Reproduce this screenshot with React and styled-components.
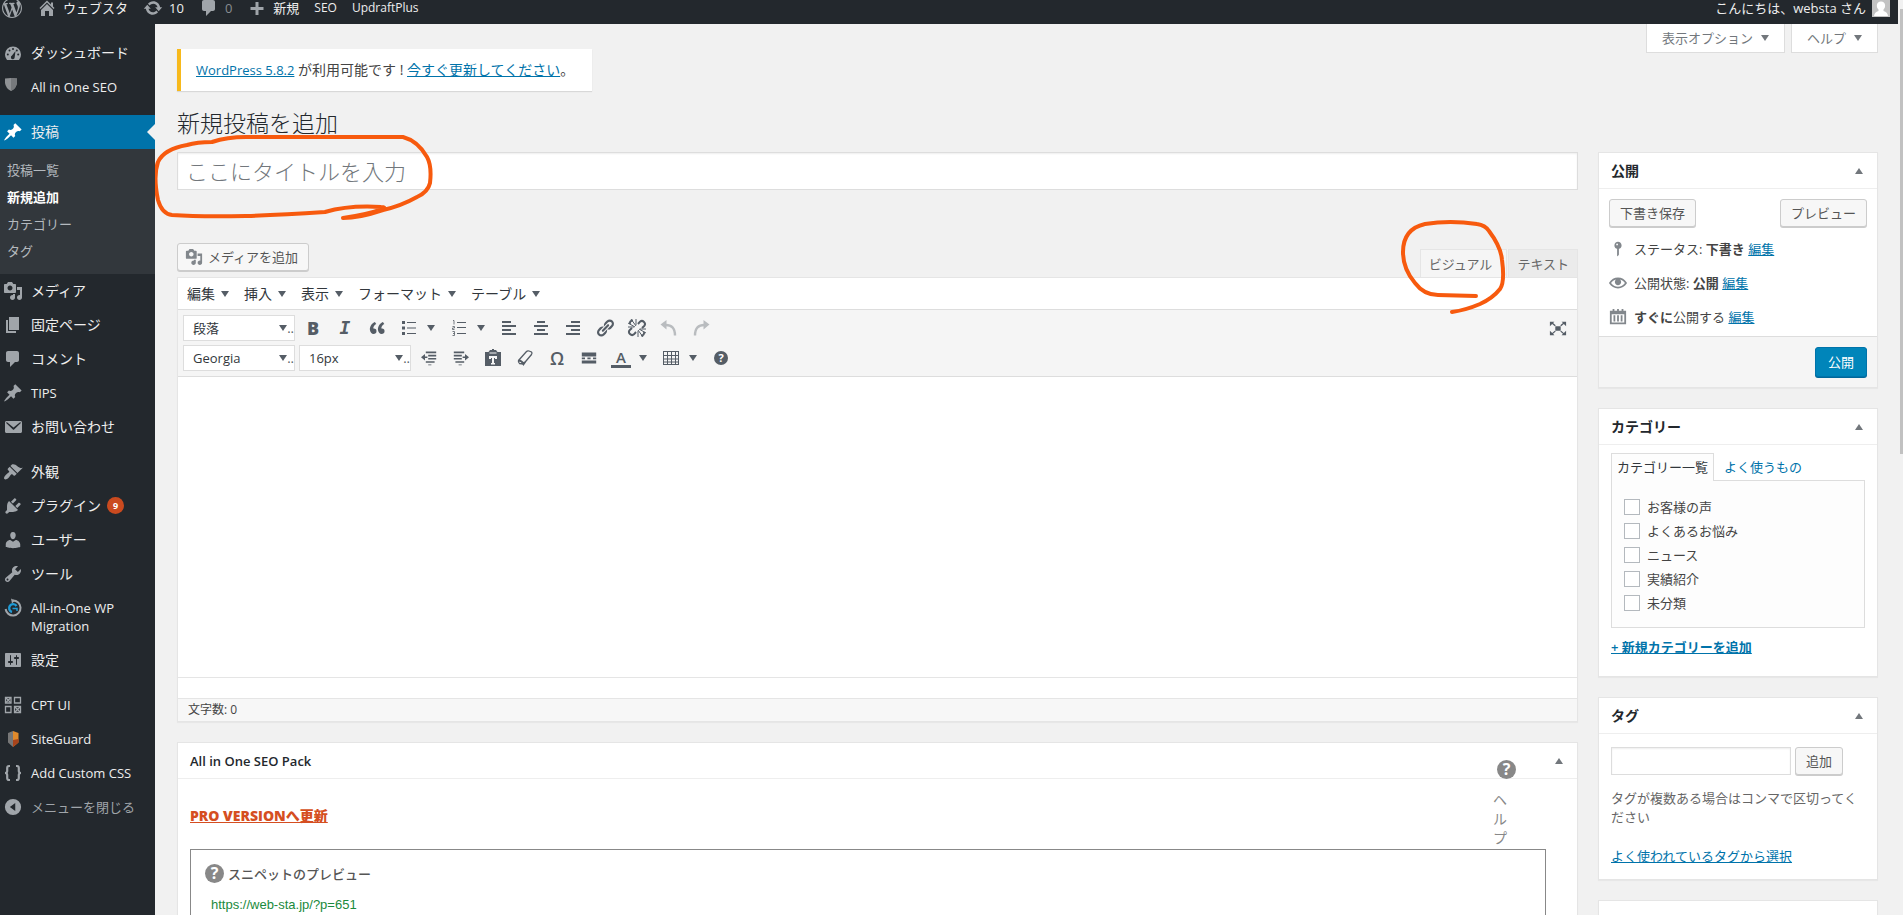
import styled, { createGlobalStyle } from "styled-components";

const GlobalStyle = createGlobalStyle`
  * {
    box-sizing: border-box;
  }

  body {
    margin: 0;
    background: #f1f1f1;
    color: #444;
    font-family: "Open Sans", "Noto Sans CJK JP", sans-serif;
    font-size: 13px;
    line-height: 18px;
  }

  button, input, select {
    margin: 0;
    font: inherit;
    color: inherit;
  }

  a {
    color: #0073aa;
  }
`;

/* ---------- icons ---------- */

const ICONS = {
  wordpress:
    "M20 10c0-5.51-4.49-10-10-10C4.48 0 0 4.49 0 10c0 5.52 4.48 10 10 10 5.51 0 10-4.48 10-10zM7.78 15.37L4.37 6.22c.55-.02 1.17-.08 1.17-.08.5-.06.44-1.13-.06-1.11 0 0-1.45.11-2.37.11-.18 0-.37 0-.58-.01C4.12 2.69 6.87 1.11 10 1.11c2.33 0 4.45.87 6.05 2.34-.68-.11-1.65.39-1.65 1.58 0 .74.45 1.36.9 2.1.35.61.55 1.36.55 2.46 0 1.49-1.4 5-1.4 5l-3.03-8.37c.54-.02.82-.17.82-.17.5-.05.44-1.25-.06-1.22 0 0-1.44.12-2.38.12-.87 0-2.33-.12-2.33-.12-.5-.03-.56 1.2-.06 1.22l.92.08 1.26 3.41zM17.41 10c.24-.64.74-1.87.43-4.25.7 1.29 1.05 2.71 1.05 4.25 0 3.29-1.73 6.24-4.4 7.78.97-2.59 1.94-5.2 2.92-7.78zM6.1 18.09C3.12 16.65 1.11 13.53 1.11 10c0-1.3.23-2.48.72-3.59C3.25 10.3 4.67 14.2 6.1 18.09zm4.03-6.63l2.58 6.98c-.86.29-1.76.45-2.71.45-.79 0-1.57-.11-2.29-.33.81-2.38 1.62-4.74 2.42-7.1z",
  home: "M16 8.5l1.53 1.53-1.06 1.06L10 4.6l-6.47 6.49-1.06-1.06L10 2.5l4 4v-2h2v4zm-6-2.46l6 5.99V18h-4v-5H8v5H4v-5.97z",
  update:
    "M10.2 3.28c3.53 0 6.43 2.61 6.92 6h2.08l-3.5 4-3.5-4h2.32c-.45-1.97-2.21-3.45-4.32-3.45-1.45 0-2.73.71-3.54 1.78L4.95 5.66C6.23 4.2 8.11 3.28 10.2 3.28zm-.4 13.44c-3.52 0-6.43-2.61-6.92-6H.8l3.5-4 3.5 4H5.48c.45 1.97 2.21 3.45 4.32 3.45 1.45 0 2.73-.71 3.54-1.78l1.71 1.95c-1.28 1.46-3.15 2.38-5.25 2.38z",
  comment:
    "M5 2h9c1.1 0 2 .9 2 2v7c0 1.1-.9 2-2 2h-2l-5 5v-5H5c-1.1 0-2-.9-2-2V4c0-1.1.9-2 2-2z",
  plus: "M16.5 9v3h-5v5h-3v-5h-5V9h5V4h3v5z",
  pin: "M10.44 3.02l1.82-1.82 6.36 6.35-1.83 1.82c-1.05-.68-2.48-.57-3.41.36l-.75.75c-.92.93-1.04 2.35-.35 3.41l-1.83 1.82-2.41-2.41-2.8 2.79c-.42.42-3.38 2.71-3.8 2.29s1.86-3.39 2.28-3.81l2.79-2.79L4.1 9.36l1.83-1.82c1.05.69 2.48.57 3.4-.36l.75-.75c.93-.92 1.05-2.35.36-3.41z",
  media:
    "M13 11V4c0-.55-.45-1-1-1h-1.67L9 1H5L3.67 3H2c-.55 0-1 .45-1 1v7c0 .55.45 1 1 1h10c.55 0 1-.45 1-1zM7 4.5c1.38 0 2.5 1.12 2.5 2.5S8.38 9.5 7 9.5 4.5 8.38 4.5 7 5.62 4.5 7 4.5zM14 6h5v10.5c0 1.38-1.12 2.5-2.5 2.5S14 17.88 14 16.5s1.12-2.5 2.5-2.5c.17 0 .34.02.5.05V9h-3V6zm-4 8.05V13h2v3.5c0 1.38-1.12 2.5-2.5 2.5S7 17.88 7 16.5 8.12 14 9.5 14c.17 0 .34.02.5.05z",
  page: "M6 15V2h10v13H6zm-1 1h8v2H3V5h2v11z",
  email:
    "M19 14.5v-9c0-.83-.67-1.5-1.5-1.5H3.49c-.83 0-1.5.67-1.5 1.5v9c0 .83.67 1.5 1.5 1.5H17.5c.83 0 1.5-.67 1.5-1.5zM17.7 5.4c.3.3.1.6-.1.8l-6.5 6.2c-.4.3-.8.3-1.2 0L3.4 6.2c-.2-.2-.4-.5-.1-.8s.7-.2 1 .1l6.2 5 6.2-5c.3-.3.7-.4 1-.1z",
  appearance:
    "M14.48 11.06L7.41 3.99l1.5-1.5c.5-.56 2.3-.47 3.51.32 1.21.8 1.43 1.28 2.91 2.1 1.18.64 2.45 1.26 4.45.85zm-.71.71L6.7 4.7 4.93 6.47c-.39.39-.39 1.02 0 1.41l1.06 1.06c.39.39.39 1.03 0 1.42-.6.6-1.43 1.11-2.21 1.69-.35.26-.7.53-1.01.84C1.43 14.23.4 16.08 1.4 17.07c.99 1 2.84-.03 4.18-1.36.31-.31.58-.66.85-1.02.57-.78 1.08-1.61 1.69-2.21.39-.39 1.02-.39 1.41 0l1.06 1.06c.39.39 1.02.39 1.41 0z",
  plugins:
    "M13.11 4.36L9.87 7.6 8 5.73l3.24-3.24c.35-.34 1.05-.2 1.56.32.52.51.66 1.21.31 1.55zm-8 1.77l.91-1.12 9.01 9.01-1.19.84c-.71.71-2.63 1.16-3.82 1.16H6.14L4.9 17.26c-.59.59-1.54.59-2.12 0-.59-.58-.59-1.53 0-2.12l1.24-1.24v-3.88c0-1.13.4-3.19 1.09-3.89zm7.26 3.97l3.24-3.24c.34-.35 1.04-.21 1.55.31.52.51.66 1.21.31 1.55l-3.24 3.25z",
  users:
    "M10 9.25c-2.27 0-2.73-3.44-2.73-3.44C7 4.02 7.82 2 9.97 2c2.16 0 2.98 2.02 2.71 3.81 0 0-.41 3.44-2.68 3.44zm0 2.57L12.72 10c2.39 0 4.52 2.33 4.52 4.53v2.49s-3.65 1.13-7.24 1.13c-3.65 0-7.24-1.13-7.24-1.13v-2.49c0-2.25 1.94-4.48 4.47-4.48z",
  tools:
    "M16.68 9.77c-1.34 1.34-3.3 1.67-4.95.99l-5.41 6.52c-.99.99-2.59.99-3.58 0s-.99-2.59 0-3.57l6.52-5.42c-.68-1.65-.35-3.61.99-4.95 1.28-1.28 3.12-1.62 4.72-1.06l-2.89 2.89 2.82 2.82 2.86-2.87c.53 1.58.18 3.39-1.08 4.65zM3.81 16.21c.4.39 1.04.39 1.43 0 .4-.4.4-1.04 0-1.43-.39-.4-1.03-.4-1.43 0-.39.39-.39 1.03 0 1.43z",
  settings:
    "M18 16V4c0-.55-.45-1-1-1H3c-.55 0-1 .45-1 1v12c0 .55.45 1 1 1h14c.55 0 1-.45 1-1zM8 11h1c.55 0 1 .45 1 1s-.45 1-1 1H8v1.5c0 .28-.22.5-.5.5s-.5-.22-.5-.5V13H6c-.55 0-1-.45-1-1s.45-1 1-1h1V5.5c0-.28.22-.5.5-.5s.5.22.5.5V11zm5-2h-1c-.55 0-1-.45-1-1s.45-1 1-1h1V5.5c0-.28.22-.5.5-.5s.5.22.5.5V7h1c.55 0 1 .45 1 1s-.45 1-1 1h-1v5.5c0 .28-.22.5-.5.5s-.5-.22-.5-.5V9z",
  collapse: "M10 1a9 9 0 1 0 0 18 9 9 0 0 0 0-18zM12.5 5.5v9L6.5 10z",
  visibility:
    "M19.7 9.4C17.7 6 14 3.9 10 3.9S2.3 6 .3 9.4L0 10l.3.6c2 3.4 5.7 5.5 9.7 5.5s7.7-2.1 9.7-5.5l.3-.6-.3-.6zM10 14.1c-3.1 0-6-1.6-7.7-4.1C3.6 8 5.7 6.6 8 6.1c-.9.6-1.5 1.7-1.5 2.9 0 1.9 1.6 3.5 3.5 3.5s3.5-1.6 3.5-3.5c0-1.2-.6-2.3-1.5-2.9 2.3.5 4.4 1.9 5.7 3.9-1.7 2.5-4.6 4.1-7.7 4.1z",
  status:
    "M14 6c0 1.86-1.28 3.41-3 3.86V16c0 1-2 2-2 2V9.86C7.28 9.41 6 7.86 6 6c0-2.21 1.79-4 4-4s4 1.79 4 4zM8 5c0 .55.45 1 1 1s1-.45 1-1-.45-1-1-1-1 .45-1 1z",
  calendar:
    "M1 3h3V1h2v2h3V1h2v2h3V1h2v2h3v15H1zM3 7v9h14V7zM5 8h2v7H5zM9 8h2v7H9zM13 8h2v7h-2z",
  quote:
    "M9.49 13.22c0-.74-.2-1.38-.61-1.9-.62-.78-1.83-.88-2.53-.72-.29-1.65 1.11-3.75 2.92-4.65L7.88 4c-2.73 1.3-5.42 4.28-4.96 8.05C3.21 14.43 4.59 16 6.54 16c.85 0 1.56-.25 2.12-.75s.83-1.18.83-2.03zm8.05 0c0-.74-.2-1.38-.61-1.9-.63-.78-1.83-.88-2.53-.72-.29-1.65 1.11-3.75 2.92-4.65L15.93 4c-2.73 1.3-5.41 4.28-4.95 8.05.29 2.38 1.66 3.95 3.61 3.95.85 0 1.56-.25 2.12-.75s.83-1.18.83-2.03z",
  alignLeft: "M12 5V3H3v2h9zm5 4V7H3v2h14zm-5 4v-2H3v2h9zm5 4v-2H3v2h14z",
  alignCenter: "M14 5V3H6v2h8zm3 4V7H3v2h14zm-3 4v-2H6v2h8zm3 4v-2H3v2h14z",
  alignRight: "M17 5V3H8v2h9zm0 4V7H3v2h14zm0 4v-2H8v2h9zm0 4v-2H3v2h14z",
  bullets:
    "M3 3h3v3H3zM3 8.500h3v3H3zM3 14h3v3H3zM8 4h9v1H8zM8 9.500h9v1H8zM8 15h9v1H8z",
  link: "M17.74 2.76c1.68 1.69 1.68 4.41 0 6.1l-1.53 1.52c-1.12 1.12-2.7 1.47-4.14 1.09l2.62-2.61.76-.77.76-.76c.84-.84.84-2.2 0-3.04-.84-.85-2.2-.85-3.04 0l-.77.76-3.38 3.38c-.37-1.44-.02-3.02 1.1-4.14l1.52-1.53c1.69-1.68 4.42-1.68 6.1 0zM8.59 13.43l5.34-5.34c.42-.42.42-1.1 0-1.52-.44-.43-1.13-.39-1.53 0l-5.33 5.34c-.42.42-.42 1.1 0 1.52.44.43 1.13.39 1.52 0zm-.76 2.29l4.14-4.15c.38 1.44.03 3.02-1.09 4.14l-1.52 1.53c-1.69 1.68-4.41 1.68-6.1 0-1.68-1.68-1.68-4.42 0-6.1l1.53-1.52c1.12-1.12 2.7-1.47 4.14-1.1l-4.14 4.15c-.85.84-.85 2.2 0 3.05.84.84 2.2.84 3.04 0z",
  outdent:
    "M6 2h13v2H6zM9 6h10v2H9zM9 10h10v2H9zM6 14h11v2H6zM9 18h4v1H9zM0 9l5-4v3h3v2H5v3z",
  indent:
    "M1 2h13v2H1zM1 6h10v2H1zM1 10h10v2H1zM3 14h11v2H3zM7 18h4v1H7zM20 9l-5-4v3h-3v2h3v3z",
  paste:
    "M2 4h3.5L7 2h2V1h2v1h2l1.500 2H18v14H2zM6.500 5.500h7v-1h-7zM6 8v3h2v-1h1v5H8v1.500h4V15h-1v-5h1v1h2V8z",
  more: "M1 3h18v5H1zM1 9.500h4v2H1zM8 9.500h4v2H8zM15 9.500h4v2h-4zM1 13h18v4H1z",
  table:
    "M2 3h16v14H2zM3 4v3h3V4zM7 4v3h3V4zM11 4v3h3V4zM15 4v3h2V4zM3 8v2.500h3V8zM7 8v2.500h3V8zM11 8v2.500h3V8zM15 8v2.500h2V8zM3 11.500V13.500h3v-2zM7 11.500V13.500h3v-2zM11 11.500V13.500h3v-2zM15 11.500V13.500h2v-2zM3 14.500V16h3v-1.500zM7 14.500V16h3v-1.500zM11 14.500V16h3v-1.500zM15 14.500V16h2v-1.500z",
  fullscreen:
    "M7 8h6v5H7zM1 3h5L4.500 4.500 7.500 7 6.500 8 3.500 5.500 1 8zM19 3h-5l1.500 1.500L12.500 7l1 1 3-2.500L19 8zM1 18h5l-1.500-1.500L7.500 14l-1-1-3 2.500L1 13zM19 18h-5l1.500-1.500L12.500 14l1-1 3 2.500L19 13z",
};

function Icon({ name, size = 20 }) {
  return (
    <svg width={size} height={size} viewBox="0 0 20 20" fill="currentColor" fillRule="evenodd" aria-hidden="true">
      <path d={ICONS[name]} />
    </svg>
  );
}

function DashboardIcon() {
  return (
    <svg width="20" height="20" viewBox="0 0 20 20" aria-hidden="true">
      <path d="M4 17h12a8 8 0 0 0 2-5.500 8 8 0 0 0-16 0A8 8 0 0 0 4 17z" fill="currentColor" />
      <g fill="#23282d">
        <circle cx="10" cy="6" r="1" />
        <circle cx="6.500" cy="7.500" r="1" />
        <circle cx="13.800" cy="7.500" r="1" />
        <circle cx="4.800" cy="11.500" r="1" />
        <circle cx="15.200" cy="11.500" r="1" />
        <path d="M12.500 8l-.8 6.200a1.900 1.900 0 1 1-2.700-1.600z" />
      </g>
    </svg>
  );
}

function ShieldIcon() {
  return (
    <svg width="20" height="20" viewBox="0 0 20 20" aria-hidden="true">
      <path d="M2 1.500Q8 .5 14 1.500v4.500q-.5 5-6 8-5.500-3-6-8z" fill="#8f9295" />
      <path d="M8 1q3 0 6 .5v4.500q-.5 5-6 8z" fill="#777a7d" />
    </svg>
  );
}

function MigrationIcon() {
  return (
    <svg width="20" height="20" viewBox="0 0 20 20" fill="none" aria-hidden="true">
      <path d="M10 2.500a7.500 7.500 0 1 1-7.400 8.500" stroke="#a0a5aa" strokeWidth="2" />
      <path d="M8 .5l4 2-3 3z" fill="#a0a5aa" />
      <path d="M13.500 8A4 4 0 1 0 9 14" stroke="#1f9bd6" strokeWidth="2.400" />
      <path d="M9.500 10.500h4.500v2.500" stroke="#1f9bd6" strokeWidth="1.500" />
    </svg>
  );
}

function CptIcon() {
  return (
    <svg width="20" height="20" viewBox="0 0 20 20" fill="none" stroke="#a0a5aa" strokeWidth="1.300" aria-hidden="true">
      <path d="M2.500 2.500h5.500v5.500H2.500zM11.500 2.500h6v5.500h-6zM2.500 11.500h5.500v6H2.500zM11.500 11.500h6v6h-6z" />
      <path d="M3 3l4.500 4.500M7.500 3L3 7.500M12 12l5 5M17 12l-5 5" />
    </svg>
  );
}

function GuardIcon() {
  return (
    <svg width="20" height="20" viewBox="0 0 20 20" aria-hidden="true">
      <path d="M10 2L5 4v9.500L10 18z" fill="#777" />
      <path d="M10 2l5.500 2v9.500L10 18z" fill="#e08a2b" />
      <path d="M10 11l5.500-1v3.500L10 18z" fill="#a8441c" />
    </svg>
  );
}

function BracesIcon() {
  return (
    <svg width="20" height="20" viewBox="0 0 20 20" fill="none" stroke="currentColor" strokeWidth="2.200" aria-hidden="true">
      <path d="M7 3H6Q4.200 3 4.200 5v3Q4.200 10 2 10q2.200 0 2.200 2v3q0 2 1.800 2h1" />
      <path d="M13 3h1q1.800 0 1.800 2v3q0 2 2.200 2-2.200 0-2.200 2v3q0 2-1.800 2h-1" />
    </svg>
  );
}

function NumbersIcon() {
  return (
    <svg width="20" height="20" viewBox="0 0 20 20" fill="none" stroke="currentColor" aria-hidden="true">
      <path d="M8 4.500h9M8 9.500h9M8 15.500h9" />
      <path d="M4 2.500h1v4M3.500 8.500h2v1.500h-2v1.500h2M3.500 13.500h2v4h-2M4 15.500h1.500" strokeWidth=".8" />
    </svg>
  );
}

function UnlinkIcon() {
  return (
    <svg width="20" height="20" viewBox="0 0 20 20" fill="none" stroke="currentColor" strokeWidth="2" aria-hidden="true">
      <path d="M11 6l2-2.300q2-1.700 4 .3t.2 4L15 10M9 14l-2 2.300q-2 1.700-4-.3t-.2-4L5 10M3 6q-.5-3.500 3-3.500M17 14q.5 3.500-3 3.500" />
      <path d="M1 5l7 4M4 1l5 7M1 9h6M9 1v6M19 15l-7-4M16 19l-5-7M19 11h-6M11 19v-6" strokeWidth="1" />
    </svg>
  );
}

function ArrowIcon({ redo }) {
  return (
    <svg width="20" height="20" viewBox="0 0 20 20" aria-hidden="true">
      <g transform={redo ? "translate(20 0) scale(-1 1)" : undefined}>
        <path d="M6 7q10-.5 10 10.500" fill="none" stroke="currentColor" strokeWidth="2.400" />
        <path d="M1.500 6.500L7.500 2v9.500z" fill="currentColor" />
      </g>
    </svg>
  );
}

function EraserIcon() {
  return (
    <svg width="20" height="20" viewBox="0 0 20 20" fill="none" stroke="currentColor" strokeWidth="1.300" aria-hidden="true">
      <path d="M3.500 12.500l8-9q1-1 2.500-.5l2.500 1q1 1 0 2.500l-8 9.500-4-.5q-1.500-1-1-3z" />
      <path d="M3.800 12.500q3 .2 4.700 3.500l1.500-2" strokeWidth="2" />
    </svg>
  );
}

function Caret({ up }) {
  return (
    <svg width="8" height="8" viewBox="0 0 8 8" fill="currentColor" aria-hidden="true">
      <path d={up ? "M0 7h8L4 1z" : "M0 1h8L4 7z"} />
    </svg>
  );
}

/* ---------- data ---------- */

const SUBMENU = ["投稿一覧", "新規追加", "カテゴリー", "タグ"];

const MENU = [
  [
    { label: "ダッシュボード", icon: <DashboardIcon /> },
    { label: "All in One SEO", icon: <ShieldIcon />, small: true },
  ],
  [
    { label: "投稿", icon: <Icon name="pin" />, active: true },
    { label: "メディア", icon: <Icon name="media" /> },
    { label: "固定ページ", icon: <Icon name="page" /> },
    { label: "コメント", icon: <Icon name="comment" /> },
    { label: "TIPS", icon: <Icon name="pin" />, small: true },
    { label: "お問い合わせ", icon: <Icon name="email" /> },
  ],
  [
    { label: "外観", icon: <Icon name="appearance" /> },
    { label: "プラグイン", icon: <Icon name="plugins" />, count: 9 },
    { label: "ユーザー", icon: <Icon name="users" /> },
    { label: "ツール", icon: <Icon name="tools" /> },
    { label: "All-in-One WP Migration", icon: <MigrationIcon />, small: true },
    { label: "設定", icon: <Icon name="settings" /> },
  ],
  [
    { label: "CPT UI", icon: <CptIcon />, small: true },
    { label: "SiteGuard", icon: <GuardIcon />, small: true },
    { label: "Add Custom CSS", icon: <BracesIcon />, small: true },
    { label: "メニューを閉じる", icon: <Icon name="collapse" size={18} />, muted: true, small: true },
  ],
];

const EDITOR_MENUS = ["編集", "挿入", "表示", "フォーマット", "テーブル"];
const CATEGORIES = ["お客様の声", "よくあるお悩み", "ニュース", "実績紹介", "未分類"];

/* ---------- parts ---------- */

function ListBox({ label, value }) {
  return (
    <ListBoxWrap>
      <ListSelect aria-label={label} defaultValue={value}>
        <option>{value}</option>
      </ListSelect>
      <ListMark>
        <Caret />
        ..
      </ListMark>
    </ListBoxWrap>
  );
}

function Tool({ label, children, menu, faded }) {
  return (
    <>
      <ToolButton aria-label={label} $faded={faded}>
        {children}
      </ToolButton>
      {menu && (
        <ToolCaret aria-label={`${label} メニュー`}>
          <Caret />
        </ToolCaret>
      )}
    </>
  );
}

function PostBox({ title, small, children }) {
  return (
    <Box>
      <BoxHeader>
        <BoxTitle $small={small}>{title}</BoxTitle>
        <Toggle aria-label={`${title} パネルを切り替え`}>
          <Caret up />
        </Toggle>
      </BoxHeader>
      {children}
    </Box>
  );
}

function AdminBar() {
  return (
    <Bar>
      <BarItem href="#" aria-label="WordPress">
        <Icon name="wordpress" />
      </BarItem>
      <BarItem href="#">
        <Icon name="home" />
        <BarText>ウェブスタ</BarText>
      </BarItem>
      <BarItem href="#">
        <Icon name="update" />
        <BarText>10</BarText>
      </BarItem>
      <BarItem href="#">
        <Icon name="comment" />
        <BarText $dim>0</BarText>
      </BarItem>
      <BarItem href="#">
        <Icon name="plus" />
        <BarText>新規</BarText>
      </BarItem>
      <BarItem href="#">
        <BarText $small>SEO</BarText>
      </BarItem>
      <BarItem href="#">
        <BarText $small>UpdraftPlus</BarText>
      </BarItem>
      <Account href="#">
        <BarText>こんにちは、websta さん</BarText>
        <Avatar viewBox="0 0 18 18" aria-hidden="true">
          <path d="M0 0h18v18H0z" fill="#c3c3c3" />
          <path d="M9 2.500c5 0 5 6 2.500 8v1.500q4 1 4.500 5H2q.5-4 4.500-5v-1.500C4 8.500 4 2.500 9 2.500z" fill="#fff" />
        </Avatar>
      </Account>
    </Bar>
  );
}

function SideMenu() {
  return (
    <Side>
      {MENU.map((group, i) => (
        <MenuGroup key={i}>
          {group.map((item) => (
            <li key={item.label}>
              <MenuLink href="#" $active={item.active} $muted={item.muted} $small={item.small}>
                <MenuIcon>{item.icon}</MenuIcon>
                <span>{item.label}</span>
                {item.count && <Count>{item.count}</Count>}
              </MenuLink>
              {item.active && (
                <SubMenu>
                  {SUBMENU.map((label) => (
                    <li key={label}>
                      <SubLink href="#" $current={label === "新規追加"}>
                        {label}
                      </SubLink>
                    </li>
                  ))}
                </SubMenu>
              )}
            </li>
          ))}
        </MenuGroup>
      ))}
    </Side>
  );
}

function Editor() {
  return (
    <section>
      <EditorTop>
        <Button>
          <Icon name="media" size={18} />
          メディアを追加
        </Button>
        <Tabs>
          <EditorTab $active>
            ビジュアル
            <TabMark viewBox="0 0 110 100" aria-hidden="true">
              <path d="M78 79L40 78Q26 78 17 66Q5 52 5 35Q5 12 27 7Q52 3 79 7Q87 8 91 14Q103 30 104 43Q107 65 102 72Q95 81 82 87Q68 93 54 95" />
            </TabMark>
          </EditorTab>
          <EditorTab>テキスト</EditorTab>
        </Tabs>
      </EditorTop>
      <EditorBox>
        <MenuBar>
          {EDITOR_MENUS.map((label) => (
            <MenuButton key={label}>
              {label}
              <Caret />
            </MenuButton>
          ))}
        </MenuBar>
        <ToolBar>
          <ToolRow>
            <ListBox label="書式" value="段落" />
            <Tool label="太字"><BoldMark>B</BoldMark></Tool>
            <Tool label="イタリック"><ItalicMark>I</ItalicMark></Tool>
            <Tool label="引用"><Icon name="quote" /></Tool>
            <Tool label="番号なしリスト" menu><Icon name="bullets" /></Tool>
            <Tool label="番号付きリスト" menu><NumbersIcon /></Tool>
            <Tool label="左寄せ"><Icon name="alignLeft" /></Tool>
            <Tool label="中央揃え"><Icon name="alignCenter" /></Tool>
            <Tool label="右寄せ"><Icon name="alignRight" /></Tool>
            <Tool label="リンクの挿入"><Icon name="link" /></Tool>
            <Tool label="リンクの削除"><UnlinkIcon /></Tool>
            <Tool label="取り消し" faded><ArrowIcon /></Tool>
            <Tool label="やり直し" faded><ArrowIcon redo /></Tool>
            <Spacer />
            <Tool label="フルスクリーン"><Icon name="fullscreen" size={18} /></Tool>
          </ToolRow>
          <ToolRow>
            <ListBox label="フォント" value="Georgia" />
            <ListBox label="フォントサイズ" value="16px" />
            <Tool label="インデントを減らす"><Icon name="outdent" size={16} /></Tool>
            <Tool label="インデントを増やす"><Icon name="indent" size={16} /></Tool>
            <Tool label="テキストとしてペースト"><Icon name="paste" /></Tool>
            <Tool label="書式設定をクリア"><EraserIcon /></Tool>
            <Tool label="特殊文字"><OmegaMark>Ω</OmegaMark></Tool>
            <Tool label="続きを読む"><Icon name="more" size={16} /></Tool>
            <Tool label="テキスト色" menu><ColorMark>A</ColorMark></Tool>
            <Tool label="表" menu><Icon name="table" /></Tool>
            <Tool label="キーボードショートカット"><Question>?</Question></Tool>
          </ToolRow>
        </ToolBar>
        <Canvas contentEditable suppressContentEditableWarning role="textbox" aria-label="本文" />
        <PathBar />
        <StatusBar>文字数: 0</StatusBar>
      </EditorBox>
    </section>
  );
}

function SeoBox() {
  return (
    <PostBox title="All in One SEO Pack" small>
      <SeoBody>
        <SeoHelp href="#">
          <Question $large>?</Question>
          <HelpText>ヘルプ</HelpText>
        </SeoHelp>
        <ProLink href="#">PRO VERSIONへ更新</ProLink>
        <Snippet>
          <SnippetTitle>
            <Question $large>?</Question>
            スニペットのプレビュー
          </SnippetTitle>
          <SnippetUrl>https://web-sta.jp/?p=651</SnippetUrl>
        </Snippet>
      </SeoBody>
    </PostBox>
  );
}

function PublishBox() {
  return (
    <PostBox title="公開">
      <PublishActions>
        <Button>下書き保存</Button>
        <Button>プレビュー</Button>
      </PublishActions>
      <PublishList>
        <PublishRow>
          <Icon name="status" />
          <span>ステータス: <b>下書き</b> <a href="#">編集</a></span>
        </PublishRow>
        <PublishRow>
          <Icon name="visibility" />
          <span>公開状態: <b>公開</b> <a href="#">編集</a></span>
        </PublishRow>
        <PublishRow>
          <Icon name="calendar" />
          <span><b>すぐに</b>公開する <a href="#">編集</a></span>
        </PublishRow>
      </PublishList>
      <PublishFooter>
        <PrimaryButton>公開</PrimaryButton>
      </PublishFooter>
    </PostBox>
  );
}

function CategoryBox() {
  return (
    <PostBox title="カテゴリー">
      <CategoryBody>
        <CategoryTabs>
          <CategoryTab href="#" $active>カテゴリー一覧</CategoryTab>
          <CategoryTab href="#">よく使うもの</CategoryTab>
        </CategoryTabs>
        <CategoryPanel>
          {CATEGORIES.map((name) => (
            <CheckLabel key={name}>
              <CheckBox type="checkbox" />
              {name}
            </CheckLabel>
          ))}
        </CategoryPanel>
        <AddLink href="#">+ 新規カテゴリーを追加</AddLink>
      </CategoryBody>
    </PostBox>
  );
}

function TagBox() {
  return (
    <PostBox title="タグ">
      <TagBody>
        <TagForm>
          <TagInput type="text" aria-label="新規タグを追加" />
          <Button>追加</Button>
        </TagForm>
        <TagHint>タグが複数ある場合はコンマで区切ってください</TagHint>
        <a href="#">よく使われているタグから選択</a>
      </TagBody>
    </PostBox>
  );
}

export default function App() {
  return (
    <Screen>
      <GlobalStyle />
      <Page>
        <AdminBar />
        <Body>
          <SideMenu />
          <Main>
            <MetaLinks>
              <MetaButton>表示オプション <Caret /></MetaButton>
              <MetaButton>ヘルプ <Caret /></MetaButton>
            </MetaLinks>
            <Notice>
              <a href="#"><Version>WordPress 5.8.2</Version></a> が利用可能です ! <a href="#">今すぐ更新してください</a>。
            </Notice>
            <Heading>新規投稿を追加</Heading>
            <Columns>
              <Primary>
                <TitleWrap>
                  <TitleInput type="text" aria-label="タイトル" placeholder="ここにタイトルを入力" />
                  <TitleMark viewBox="0 0 280 86" aria-hidden="true">
                    <path d="M188 80Q211 77 228 71Q231 69 226 69Q194 67 170 74Q125 77 91 78Q45 79 17 77Q7 76 3 62Q-2 38 3 24Q9 11 32 7Q42 4 57 4Q72 -1 91 -1L248 -1Q263 3 272 19Q277 28 275 45Q273 54 262 59Q246 68 228 72Q204 80 188 80" />
                  </TitleMark>
                </TitleWrap>
                <Editor />
                <SeoBox />
              </Primary>
              <Secondary>
                <PublishBox />
                <CategoryBox />
                <TagBox />
                <Box>
                  <BoxHeader />
                </Box>
              </Secondary>
            </Columns>
          </Main>
        </Body>
      </Page>
      <ScrollTrack>
        <ScrollThumb />
      </ScrollTrack>
    </Screen>
  );
}

/* ---------- styles ---------- */

const Screen = styled.div`
  display: flex;
  height: 100vh;
  overflow: hidden;
`;

const Page = styled.div`
  display: flex;
  flex-direction: column;
  flex: 1;
  min-width: 0;
`;

const ScrollTrack = styled.div`
  width: 5px;
  padding: 9px 0 0 2px;
  background: #f1f1f1;
`;

const ScrollThumb = styled.div`
  height: calc(49vh - 3px);
  background: #c1c1c1;
`;

const Bar = styled.header`
  display: flex;
  align-items: flex-end;
  flex-shrink: 0;
  gap: 15px;
  height: 24px;
  padding: 0 8px 0 2px;
  overflow: hidden;
  background: #23282d;
`;

const BarItem = styled.a`
  display: flex;
  align-items: center;
  flex-shrink: 0;
  gap: 6px;
  height: 32px;
  color: #a0a5aa;
  text-decoration: none;
`;

const BarText = styled.span`
  color: ${({ $dim }) => ($dim ? "#888c90" : "#eee")};
  font-size: ${({ $small }) => ($small ? "12px" : "13px")};
`;

const Account = styled(BarItem)`
  margin-left: auto;
`;

const Avatar = styled.svg`
  width: 18px;
  height: 18px;
`;

const Body = styled.div`
  display: flex;
  flex: 1;
  min-height: 0;
`;

const Side = styled.nav`
  display: flex;
  flex-direction: column;
  gap: 11px;
  flex-shrink: 0;
  width: 155px;
  padding-top: 12px;
  background: #23282d;
`;

const MenuGroup = styled.ul`
  margin: 0;
  padding: 0;
  list-style: none;
`;

const MenuLink = styled.a`
  position: relative;
  display: flex;
  gap: 8px;
  padding: 8px 8px 8px 3px;
  background: ${({ $active }) => ($active ? "#0073aa" : "transparent")};
  color: ${({ $muted }) => ($muted ? "#a0a5aa" : "#eee")};
  font-size: ${({ $small }) => ($small ? "13px" : "14px")};
  text-decoration: none;

  &::after {
    content: "";
    display: ${({ $active }) => ($active ? "block" : "none")};
    position: absolute;
    top: 9px;
    right: 0;
    border: 8px solid transparent;
    border-left: 0;
    border-right-color: #f1f1f1;
  }

  svg {
    color: ${({ $active }) => ($active ? "#fff" : "#a0a5aa")};
  }
`;

const MenuIcon = styled.span`
  display: flex;
  align-items: center;
  justify-content: center;
  flex-shrink: 0;
  width: 20px;
  height: 18px;
`;

const Count = styled.span`
  width: 17px;
  height: 17px;
  margin-left: -2px;
  border-radius: 9px;
  background: #ca4a1f;
  color: #fff;
  font-size: 9px;
  font-weight: 700;
  line-height: 17px;
  text-align: center;
`;

const SubMenu = styled.ul`
  margin: 0;
  padding: 8px 0 9px;
  background: #32373c;
  list-style: none;
`;

const SubLink = styled.a`
  display: block;
  padding: 0 7px;
  color: ${({ $current }) => ($current ? "#fff" : "#b4b9be")};
  font-weight: ${({ $current }) => ($current ? 600 : 400)};
  line-height: 27px;
  text-decoration: none;
`;

const Main = styled.main`
  flex: 1;
  min-width: 0;
  padding: 0 20px 0 22px;
  overflow: hidden;
`;

const MetaLinks = styled.div`
  display: flex;
  justify-content: flex-end;
  gap: 6px;
  height: 25px;
`;

const MetaButton = styled.button`
  display: flex;
  align-items: center;
  gap: 8px;
  height: 29px;
  padding: 0 15px;
  border: 1px solid #ddd;
  border-top: 0;
  background: #fff;
  color: #72777c;
`;

const Notice = styled.div`
  width: fit-content;
  padding: 11px 18px 11px 15px;
  border-left: 4px solid #f7b91c;
  background: #fff;
  box-shadow: 0 1px 1px rgba(0, 0, 0, 0.1);
  font-size: 14px;
  line-height: 19px;
`;

const Version = styled.span`
  font-size: 13px;
`;

const Heading = styled.h1`
  margin: 18px 0 15px;
  color: #23282d;
  font-size: 23px;
  font-weight: 300;
  line-height: 28px;
`;

const Columns = styled.div`
  display: flex;
  gap: 20px;
`;

const Primary = styled.div`
  display: flex;
  flex-direction: column;
  gap: 20px;
  flex: 1;
  min-width: 0;
`;

const Secondary = styled.div`
  display: flex;
  flex-direction: column;
  gap: 20px;
  width: 280px;
`;

const TitleWrap = styled.div`
  position: relative;
  height: 71px;
`;

const TitleInput = styled.input`
  display: block;
  width: 100%;
  height: 38px;
  padding: 0 8px;
  border: 1px solid #ddd;
  background: #fff;
  box-shadow: inset 0 1px 2px rgba(0, 0, 0, 0.07);
  font-size: 22px;
  font-weight: 300;

  &::placeholder {
    color: #72777c;
  }
`;

const Mark = styled.svg`
  position: absolute;
  z-index: 1;
  overflow: visible;
  fill: none;
  stroke: #f75a0e;
  stroke-width: 4;
  stroke-linecap: round;
  pointer-events: none;
`;

const TitleMark = styled(Mark)`
  top: -14px;
  left: -22px;
  width: 280px;
  height: 86px;
`;

const TabMark = styled(Mark)`
  top: -33px;
  left: -23px;
  width: 110px;
  height: 100px;
`;

const EditorTop = styled.div`
  display: flex;
  justify-content: space-between;
  align-items: flex-start;
  height: 34px;
`;

const Button = styled.button`
  display: flex;
  align-items: center;
  justify-content: center;
  gap: 5px;
  height: 28px;
  padding: 0 10px;
  border: 1px solid #ccc;
  border-radius: 3px;
  background: #f7f7f7;
  box-shadow: 0 1px 0 #ccc;
  color: #555;
  white-space: nowrap;

  svg {
    margin-left: -3px;
    color: #82878c;
  }
`;

const PrimaryButton = styled(Button)`
  height: 30px;
  padding: 0 12px;
  border-color: #0073aa;
  background: #0085ba;
  box-shadow: 0 1px 0 #006799;
  color: #fff;
`;

const Tabs = styled.div`
  display: flex;
  align-self: flex-end;
  gap: 1px;
`;

const EditorTab = styled.button`
  position: relative;
  height: 28px;
  padding: 0 ${({ $active }) => ($active ? "14px" : "8px")} 0 8px;
  border: 1px solid #e5e5e5;
  border-bottom: 0;
  background: ${({ $active }) => ($active ? "#f5f5f5" : "#ebebeb")};
  color: #666;
`;

const EditorBox = styled.div`
  border: 1px solid #e5e5e5;
  background: #fff;
  box-shadow: 0 1px 1px rgba(0, 0, 0, 0.04);
`;

const MenuBar = styled.div`
  display: flex;
  gap: 15px;
  height: 32px;
  padding: 0 9px;
  border-bottom: 1px solid #ddd;
`;

const MenuButton = styled.button`
  display: flex;
  align-items: center;
  gap: 6px;
  padding: 0;
  border: 0;
  background: none;
  color: #32373c;
  font-size: 14px;

  svg {
    color: #555d66;
  }
`;

const ToolBar = styled.div`
  display: flex;
  flex-direction: column;
  gap: 4px;
  padding: 5px 3px 5px 5px;
  border-bottom: 1px solid #ddd;
  background: #f5f5f5;
`;

const ToolRow = styled.div`
  display: flex;
  align-items: center;
  height: 26px;
`;

const Spacer = styled.div`
  flex: 1;
`;

const ListBoxWrap = styled.div`
  position: relative;
  width: 112px;
  margin-right: 2px;

  & + & {
    margin-left: 2px;
  }
`;

const ListSelect = styled.select`
  display: block;
  appearance: none;
  width: 100%;
  height: 26px;
  padding: 0 9px;
  border: 1px solid #ddd;
  border-radius: 0;
  background: #fff;
  color: #32373c;
`;

const ListMark = styled.span`
  position: absolute;
  top: 4px;
  right: 1px;
  display: flex;
  align-items: center;
  color: #555d66;
  pointer-events: none;
`;

const ToolButton = styled.button`
  display: flex;
  align-items: center;
  justify-content: center;
  width: 28px;
  height: 26px;
  margin: 0 2px;
  padding: 0;
  border: 0;
  background: none;
  color: ${({ $faded }) => ($faded ? "#b9bcbf" : "#555d66")};
`;

const ToolCaret = styled.button`
  display: flex;
  align-items: center;
  justify-content: center;
  width: 16px;
  height: 26px;
  margin: 0 4px 0 -2px;
  padding: 0;
  border: 0;
  background: none;
  color: #555d66;
`;

const BoldMark = styled.span`
  font-size: 18px;
  font-weight: 800;
`;

const ItalicMark = styled.span`
  font-family: "DejaVu Sans Mono", monospace;
  font-size: 18px;
  font-style: italic;
  font-weight: 700;
`;

const OmegaMark = styled.span`
  font-size: 18px;
  font-weight: 600;
`;

const ColorMark = styled.span`
  width: 20px;
  border-bottom: 3px solid #555d66;
  font-size: 15px;
  font-weight: 600;
  line-height: 16px;
  text-align: center;
`;

const Question = styled.span`
  flex-shrink: 0;
  width: ${({ $large }) => ($large ? "19px" : "14px")};
  height: ${({ $large }) => ($large ? "19px" : "14px")};
  border-radius: 50%;
  background: ${({ $large }) => ($large ? "#888" : "#555d66")};
  color: #fff;
  font-size: ${({ $large }) => ($large ? "16px" : "11px")};
  font-weight: 700;
  line-height: ${({ $large }) => ($large ? "19px" : "14px")};
  text-align: center;
`;

const Canvas = styled.div`
  height: 300px;
  outline: 0;
`;

const PathBar = styled.div`
  height: 21px;
  border-top: 1px solid #e5e5e5;
`;

const StatusBar = styled.div`
  padding: 2px 10px;
  border-top: 1px solid #e5e5e5;
  background: #f7f7f7;
  font-size: 12px;
`;

const Box = styled.section`
  border: 1px solid #e5e5e5;
  background: #fff;
  box-shadow: 0 1px 1px rgba(0, 0, 0, 0.04);
`;

const BoxHeader = styled.div`
  display: flex;
  align-items: center;
  justify-content: space-between;
  height: 36px;
  padding: 0 14px 0 12px;
  border-bottom: 1px solid #eee;
`;

const BoxTitle = styled.h2`
  margin: 0;
  color: #23282d;
  font-size: ${({ $small }) => ($small ? "13px" : "14px")};
  font-weight: 600;
`;

const Toggle = styled.button`
  display: flex;
  padding: 0;
  border: 0;
  background: none;
  color: #72777c;
`;

const SeoBody = styled.div`
  position: relative;
  padding: 28px 31px 0 12px;
`;

const SeoHelp = styled.a`
  position: absolute;
  top: -19px;
  right: 61px;
  display: flex;
  flex-direction: column;
  gap: 11px;
  width: 19px;
  color: #888;
  text-decoration: none;
`;

const HelpText = styled.span`
  width: 14px;
  margin-left: -4px;
  font-size: 14px;
  line-height: 19px;
  word-break: break-all;
`;

const ProLink = styled.a`
  color: #d54e21;
  font-size: 14px;
  font-weight: 800;
`;

const Snippet = styled.div`
  height: 160px;
  margin-top: 24px;
  padding: 14px;
  border: 1px solid #888;
`;

const SnippetTitle = styled.div`
  display: flex;
  align-items: center;
  gap: 4px;
  color: #555;
  font-weight: 500;
`;

const SnippetUrl = styled.div`
  padding: 13px 6px;
  color: #1a8a3c;
  font-family: "Liberation Sans", Arial, sans-serif;
  font-size: 13px;
`;

const PublishActions = styled.div`
  display: flex;
  justify-content: space-between;
  padding: 10px 10px 5px;
`;

const PublishList = styled.div`
  padding: 0 10px 2px;
`;

const PublishRow = styled.div`
  display: flex;
  align-items: center;
  gap: 7px;
  height: 34px;

  svg {
    width: 18px;
    height: 18px;
    color: #82878c;
  }

  b {
    font-weight: 600;
  }
`;

const PublishFooter = styled.div`
  display: flex;
  justify-content: flex-end;
  padding: 10px;
  border-top: 1px solid #ddd;
  background: #f5f5f5;
`;

const CategoryBody = styled.div`
  padding: 8px 12px 10px;
`;

const CategoryTabs = styled.div`
  display: flex;
`;

const CategoryTab = styled.a`
  height: 28px;
  margin-bottom: -1px;
  padding: 4px 5px;
  border: 1px solid ${({ $active }) => ($active ? "#ddd" : "transparent")};
  border-bottom: 0;
  background: ${({ $active }) => ($active ? "#fdfdfd" : "transparent")};
  color: ${({ $active }) => ($active ? "#32373c" : "#0073aa")};
  text-decoration: none;

  & + & {
    margin-left: 4px;
  }
`;

const CategoryPanel = styled.div`
  height: 148px;
  padding: 14px 12px;
  border: 1px solid #ddd;
  background: #fdfdfd;
`;

const CheckLabel = styled.label`
  display: flex;
  align-items: center;
  gap: 7px;
  height: 24px;
`;

const CheckBox = styled.input`
  appearance: none;
  width: 16px;
  height: 16px;
  border: 1px solid #b4b9be;
  background: #fff;
`;

const AddLink = styled.a`
  display: block;
  width: fit-content;
  margin: 10px 0;
  font-weight: 600;
`;

const TagBody = styled.div`
  padding: 13px 12px 14px;
`;

const TagForm = styled.div`
  display: flex;
  gap: 4px;
`;

const TagInput = styled.input`
  width: 180px;
  height: 28px;
  border: 1px solid #ddd;
  background: #fff;
  box-shadow: inset 0 1px 2px rgba(0, 0, 0, 0.07);
`;

const TagHint = styled.p`
  margin: 14px 0 20px;
  color: #666;
  line-height: 19px;
`;
